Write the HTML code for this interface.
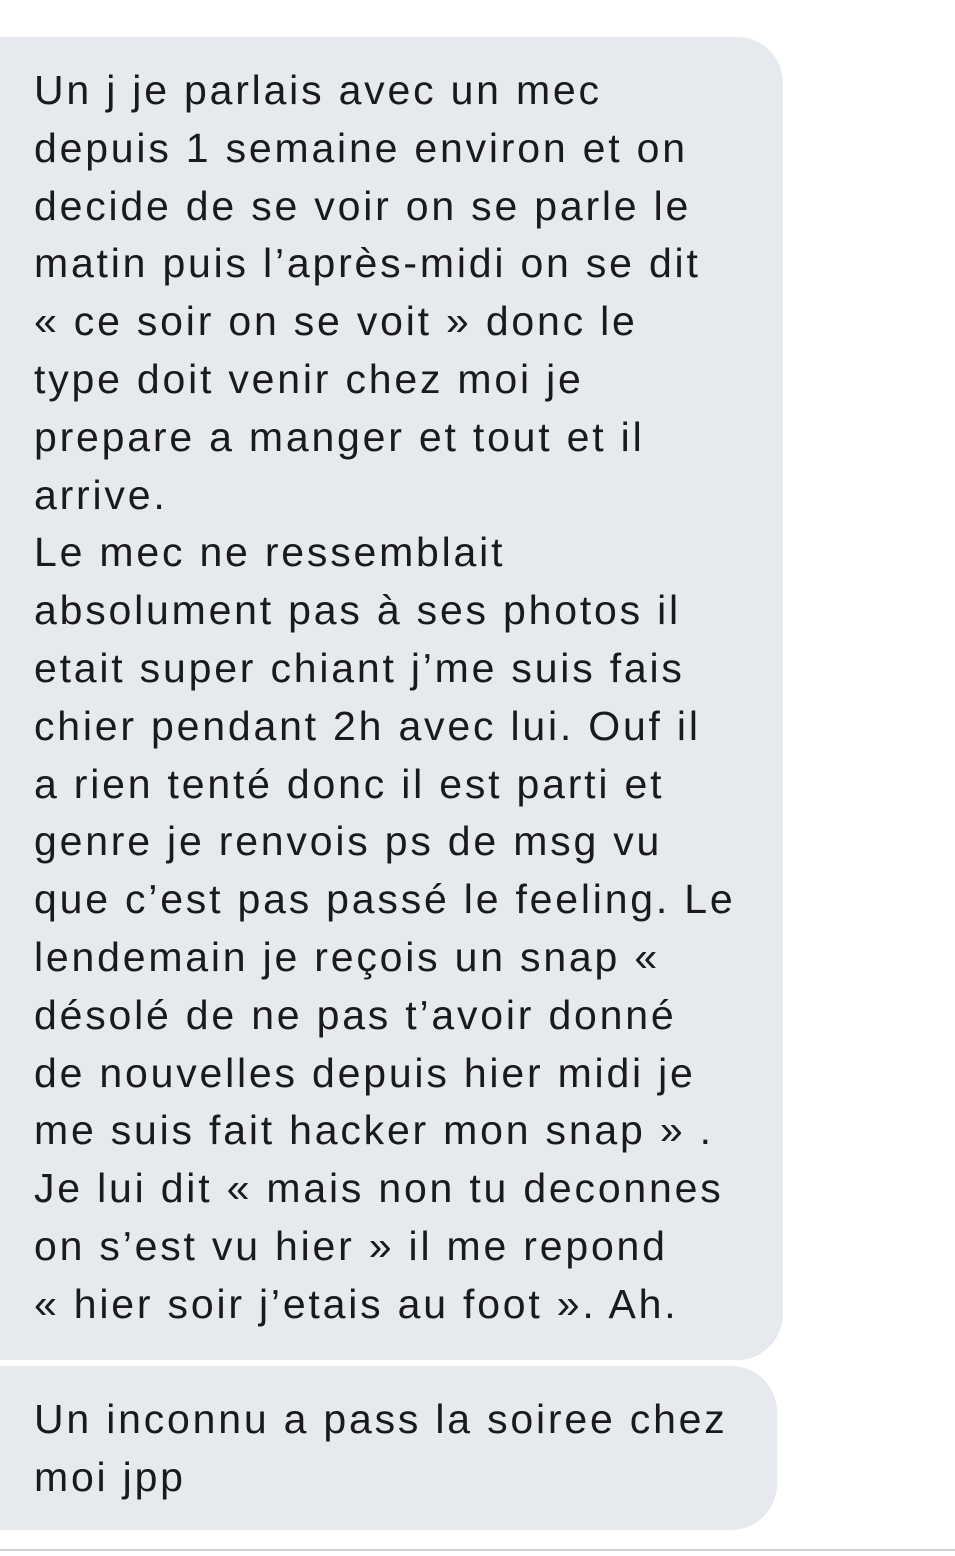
<!DOCTYPE html>
<html><head><meta charset="utf-8"><style>
html,body{margin:0;padding:0;background:#fff;width:955px;height:1556px;overflow:hidden;position:relative}
.b{position:absolute;left:0;background:#e6e9ed;font-family:"Liberation Sans",sans-serif;font-size:41px;letter-spacing:2.8px;color:#1a1a1a;line-height:57.8px;white-space:nowrap;box-sizing:border-box;padding-left:34px}
#b1{top:37px;width:783px;height:1323px;border-radius:0 46px 46px 0;padding-top:25px}
#b2{top:1366px;width:777px;height:164px;border-radius:0 46px 46px 0;padding-top:25px}
.line{position:absolute;left:0;top:1549px;width:955px;height:2px;background:#cfcfcf}
</style></head><body>
<div class="b" id="b1">Un j je parlais avec un mec<br>depuis 1 semaine environ et on<br>decide de se voir on se parle le<br>matin puis l’après-midi on se dit<br>« ce soir on se voit » donc le<br>type doit venir chez moi je<br>prepare a manger et tout et il<br>arrive.<br>Le mec ne ressemblait<br>absolument pas à ses photos il<br>etait super chiant j’me suis fais<br>chier pendant 2h avec lui. Ouf il<br>a rien tenté donc il est parti et<br>genre je renvois ps de msg vu<br>que c’est pas passé le feeling. Le<br>lendemain je reçois un snap «<br>désolé de ne pas t’avoir donné<br>de nouvelles depuis hier midi je<br>me suis fait hacker mon snap » .<br>Je lui dit « mais non tu deconnes<br>on s’est vu hier » il me repond<br>« hier soir j’etais au foot ». Ah.</div>
<div class="b" id="b2">Un inconnu a pass la soiree chez<br>moi jpp</div>
<div class="line"></div>
</body></html>
